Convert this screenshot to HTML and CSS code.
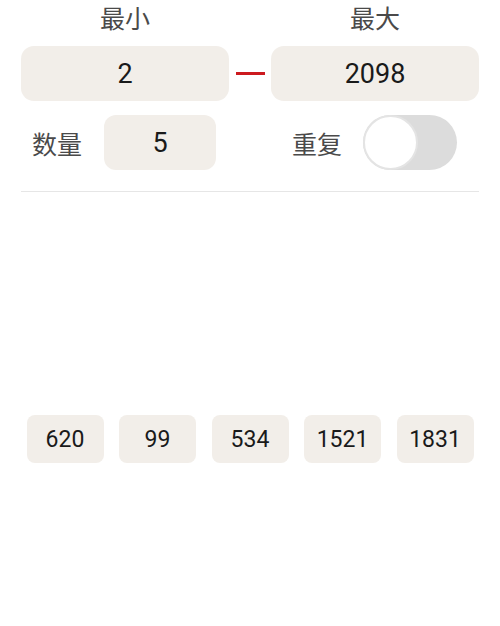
FILE: index.html
```html
<!DOCTYPE html>
<html lang="zh">
<head>
<meta charset="utf-8">
<link rel="stylesheet" href="styles.css">
</head>
<body>
<div class="page">
  <div class="range">
    <div class="col">
      <div class="label">最小</div>
      <div class="box big">2</div>
    </div>
    <div class="dash"></div>
    <div class="col">
      <div class="label">最大</div>
      <div class="box big">2098</div>
    </div>
  </div>
  <div class="opts">
    <div class="opt left">
      <span class="olabel">数量</span>
      <div class="box count">5</div>
    </div>
    <div class="opt right">
      <span class="olabel">重复</span>
      <div class="toggle"><div class="knob"></div></div>
    </div>
  </div>
  <div class="divider"></div>
  <div class="results">
    <div class="rbox">620</div>
    <div class="rbox">99</div>
    <div class="rbox">534</div>
    <div class="rbox">1521</div>
    <div class="rbox">1831</div>
  </div>
</div>
</body>
</html>
```

FILE: styles.css
```css
html, body {
  margin: 0;
  padding: 0;
  background: #ffffff;
}
body {
  font-family: Roboto, "Noto Sans CJK SC", sans-serif;
  color: #1a1a1a;
}
.page {
  width: 500px;
  height: 626px;
  padding: 0 21px;
  box-sizing: border-box;
}
.range {
  display: flex;
  align-items: flex-end;
}
.col {
  width: 208px;
  display: flex;
  flex-direction: column;
  align-items: center;
}
.label {
  font-family: "Noto Sans CJK SC", sans-serif;
  font-size: 25px;
  line-height: 34px;
  color: #4a4a4a;
  margin-bottom: 12px;
}
.box {
  background: #f2eee9;
  display: flex;
  align-items: center;
  justify-content: center;
  font-size: 27px;
}
.big {
  width: 208px;
  height: 55px;
  border-radius: 13px;
}
.dash {
  width: 29px;
  height: 3px;
  background: #cc1a1f;
  margin: 0 6.5px 26px;
  flex: none;
}
.opts {
  display: flex;
  gap: 42px;
  margin-top: 14px;
}
.opt {
  width: 208px;
  box-sizing: border-box;
  display: flex;
  align-items: center;
  flex: none;
}
.opt.left {
  padding-left: 11px;
}
.opt.right {
  padding-left: 21px;
}
.olabel {
  font-family: "Noto Sans CJK SC", sans-serif;
  font-size: 25px;
  line-height: 30px;
  width: 50px;
  color: #4a4a4a;
  margin-right: 21px;
  flex: none;
}
.opt.left .olabel {
  margin-right: 22px;
}
.count {
  width: 112px;
  height: 55px;
  border-radius: 12px;
  flex: none;
}
.toggle {
  width: 94px;
  height: 55px;
  border-radius: 28px;
  background: #dcdcdc;
  position: relative;
  box-sizing: border-box;
  flex: none;
}
.knob {
  position: absolute;
  left: 0;
  top: 0;
  width: 55px;
  height: 55px;
  border-radius: 50%;
  background: #ffffff;
  border: 2px solid #e4e4e4;
  box-sizing: border-box;
}
.divider {
  height: 1px;
  background: #e6e6e6;
  margin-top: 21px;
}
.results {
  display: flex;
  justify-content: center;
  gap: 15.5px;
  margin: 223px -21px 0;
}
.rbox {
  width: 77px;
  height: 48px;
  border-radius: 8px;
  background: #f2eee9;
  display: flex;
  align-items: center;
  justify-content: center;
  font-size: 23px;
}
```
